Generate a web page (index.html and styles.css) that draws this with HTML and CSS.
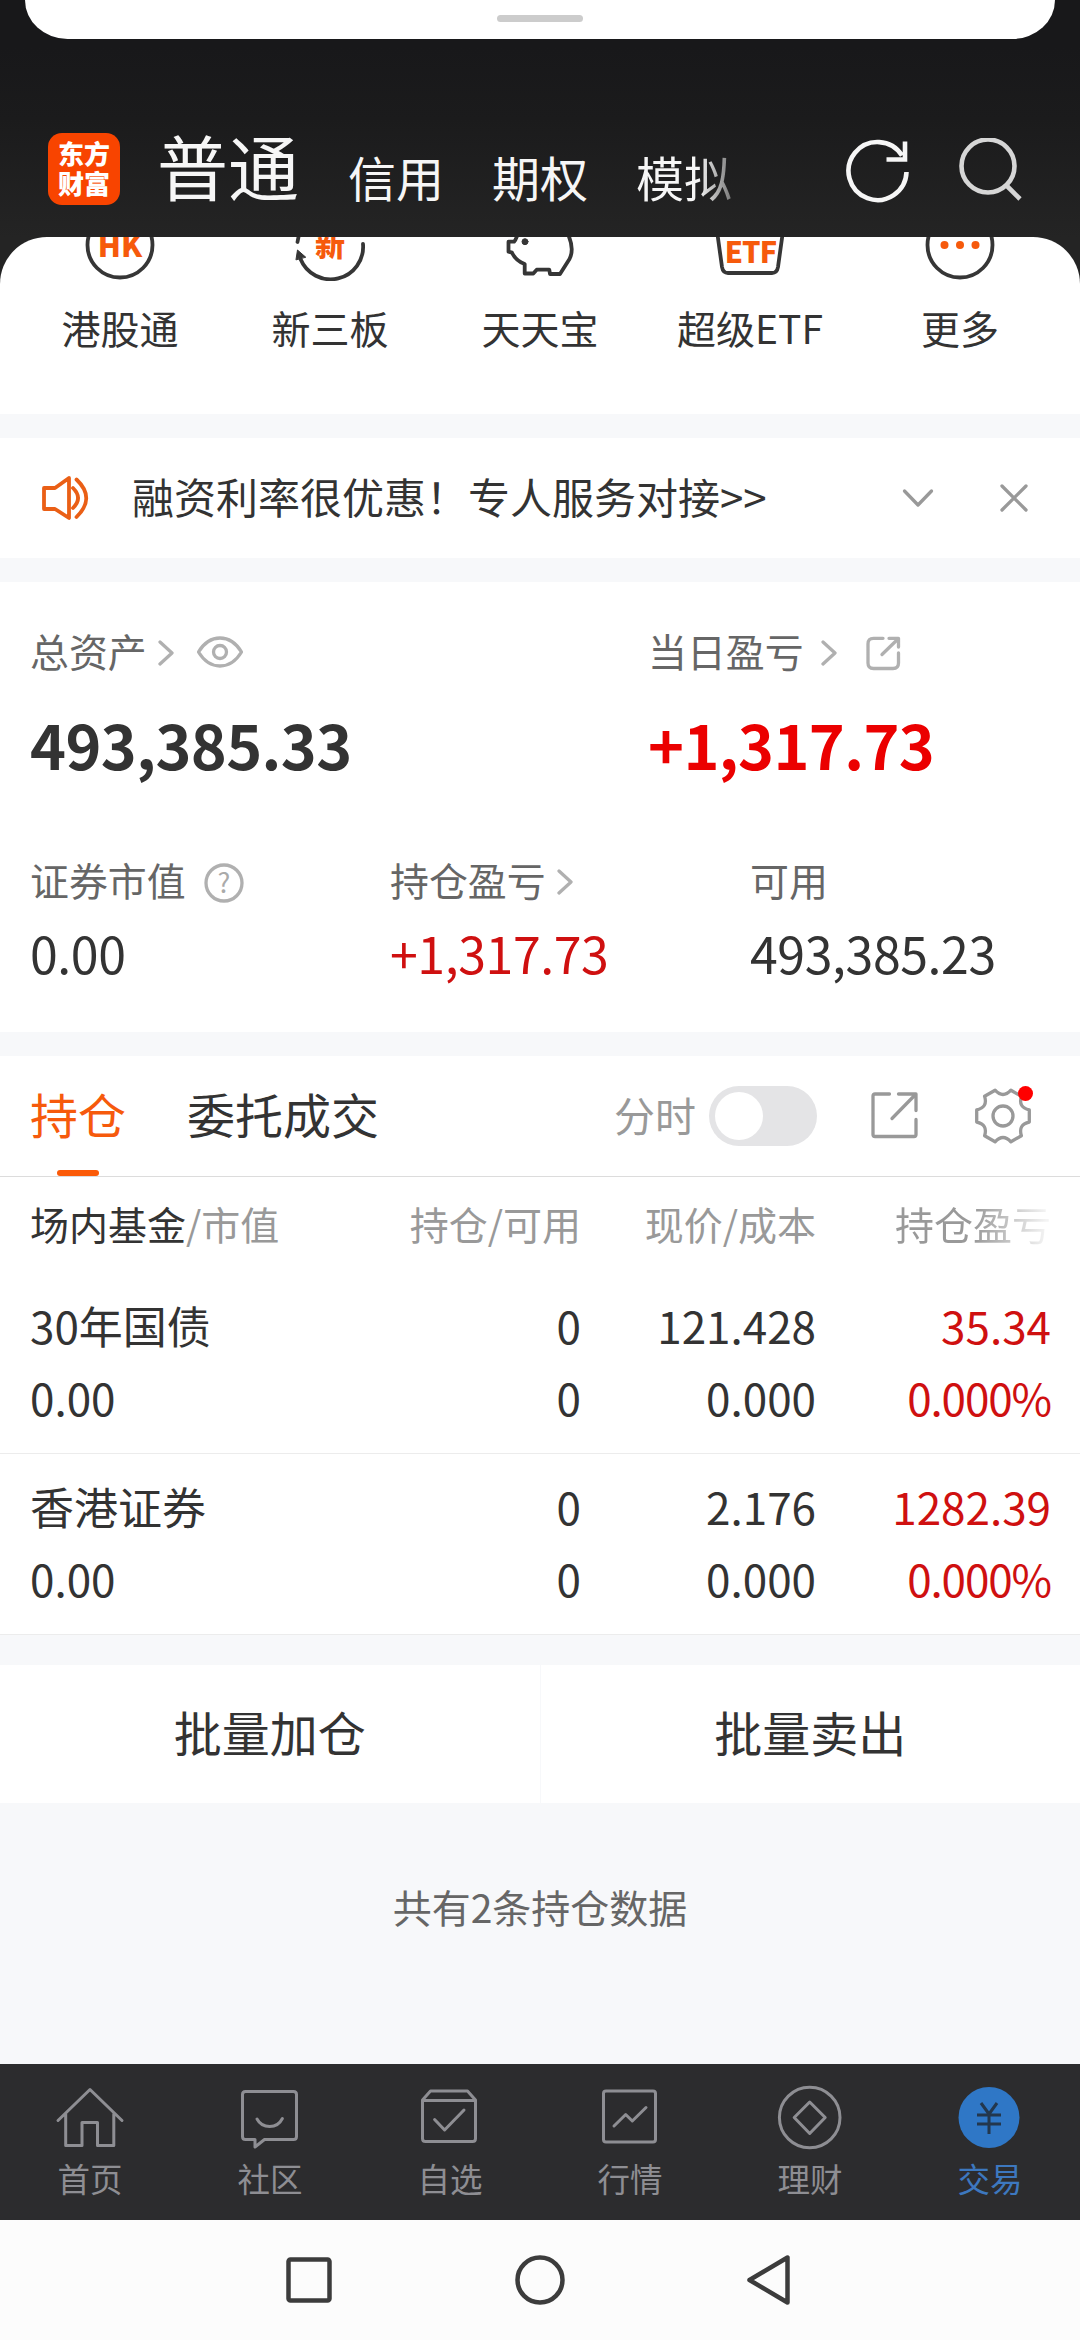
FILE: index.html
```
<!DOCTYPE html>
<html lang="zh-CN">

<head>
    <meta charset="UTF-8">
    <meta name="viewport" content="width=device-width, initial-scale=1.0">
    <title>交易</title>
    <link rel="stylesheet" href="styles.css">
</head>

<body>
    <header class="top">
        <div class="sheet"><span class="handle"></span></div>
        <div class="top-bar">
            <div class="logo">东方<br>财富</div>
            <nav class="accounts">
                <b class="current">普通</b>
                <span>信用</span>
                <span>期权</span>
                <span class="fading">模拟</span>
            </nav>
            <svg class="refresh" width="66" height="66" viewBox="0 0 66 66">
                <path d="M61.500 34A29 29 0 1 1 57 17.500M60 3.500V21.500H41.500" />
            </svg>
            <svg class="search" width="66" height="66" viewBox="0 0 66 66">
                <circle cx="30" cy="28" r="26.500" />
                <path d="M48 47L62 61" />
            </svg>
        </div>
    </header>

    <section class="shortcuts">
        <div class="shortcut">
            <svg width="72" height="72" viewBox="0 0 72 72">
                <circle cx="36" cy="36" r="32.500" />
                <text x="36" y="47.500">HK</text>
            </svg>
            <span>港股通</span>
        </div>
        <div class="shortcut">
            <svg width="72" height="72" viewBox="0 0 72 72">
                <path d="M69 35A32.500 32.500 0 0 1 6.500 50M4.500 28L3.500 33" />
                <path class="solid" d="M2 50.500L3.500 41L11.500 48Z" />
                <text x="36" y="47">新</text>
            </svg>
            <span>新三板</span>
        </div>
        <div class="shortcut">
            <svg width="72" height="72" viewBox="0 0 72 72">
                <path d="M14 24Q12 31 10 32.700H4.500V42.700L8 43.700Q12 52 20.700 55V64.500H29.300L32.700 60.700H45.300L46 65H56L65.500 50Q70.500 40 64.300 26" />
                <circle class="solid" cx="21" cy="32.700" r="3" />
            </svg>
            <span>天天宝</span>
        </div>
        <div class="shortcut">
            <svg width="72" height="72" viewBox="0 0 72 72">
                <path d="M3 22L8 58Q9 64 14 64H58Q63 64 64 58L69 22" />
                <text class="etf" x="36.500" y="53.500">ETF</text>
            </svg>
            <span>超级ETF</span>
        </div>
        <div class="shortcut">
            <svg width="72" height="72" viewBox="0 0 72 72">
                <circle cx="36" cy="36" r="32.500" />
                <g class="dots">
                    <circle cx="20.500" cy="36" r="4" />
                    <circle cx="36" cy="36" r="4" />
                    <circle cx="51.500" cy="36" r="4" />
                </g>
            </svg>
            <span>更多</span>
        </div>
    </section>

    <section class="notice">
        <svg class="speaker" width="48" height="44" viewBox="0 0 48 44">
            <path d="M2 12V33H13L27 42V2L13 12ZM31 12Q41 22 31 32M34.500 3.500Q54 22 34.500 41" />
        </svg>
        <p>融资利率很优惠！专人服务对接&gt;&gt;</p>
        <svg width="32" height="20" viewBox="0 0 32 20"><path d="M2.500 3L16 17L29.500 3" /></svg>
        <svg width="28" height="28" viewBox="0 0 28 28"><path d="M2 2L26 26M26 2L2 26" /></svg>
    </section>

    <section class="assets">
        <div class="totals">
            <div class="total">
                <h3>总资产
                    <svg width="16" height="26" viewBox="0 0 16 26"><path d="M2 2L14 13L2 24" /></svg>
                    <svg class="eye" width="46" height="32" viewBox="0 0 46 32">
                        <path d="M1.500 16Q10 2 23 2T44.500 16Q36 30 23 30T1.500 16Z" />
                        <circle cx="23" cy="16" r="6.500" />
                    </svg>
                </h3>
                <strong>493,385.33</strong>
            </div>
            <div class="total">
                <h3>当日盈亏
                    <svg class="wide" width="16" height="26" viewBox="0 0 16 26"><path d="M2 2L14 13L2 24" /></svg>
                    <svg class="open" width="35" height="35" viewBox="0 0 35 35">
                        <path d="M17 2.300H7.500Q2 2.300 2 8V27Q2 32.500 7.500 32.500H27Q32.500 32.500 32.500 27V17M23 2.300H32.500V11M32 3L16 18.500" />
                    </svg>
                </h3>
                <strong class="up">+1,317.73</strong>
            </div>
        </div>
        <div class="details">
            <div class="detail">
                <h3>证券市值
                    <svg class="help" width="40" height="40" viewBox="0 0 40 40">
                        <circle cx="20" cy="20" r="18" />
                        <text x="20" y="30">?</text>
                    </svg>
                </h3>
                <span>0.00</span>
            </div>
            <div class="detail">
                <h3>持仓盈亏
                    <svg width="16" height="26" viewBox="0 0 16 26"><path d="M2 2L14 13L2 24" /></svg>
                </h3>
                <span class="up">+1,317.73</span>
            </div>
            <div class="detail">
                <h3>可用</h3>
                <span>493,385.23</span>
            </div>
        </div>
    </section>

    <section class="positions">
        <div class="tabs">
            <span class="tab active">持仓</span>
            <span class="tab">委托成交</span>
            <span class="switch-label">分时</span>
            <span class="switch"></span>
            <svg class="share" width="48" height="48" viewBox="0 0 48 48">
                <path d="M18.500 2H4Q2 2 2 4V42.500Q2 44.500 4 44.500H43Q45 44.500 45 42.500V27.500M27.500 2H45V18.500M44 3L21 26.500" />
            </svg>
            <div class="settings">
                <svg width="58" height="58" viewBox="-29 -29 58 58">
                    <path d="M26.300 -6.100V6.100Q14.900 8.600 18.400 19.700L7.900 25.800Q0 17.200 -7.900 25.800L-18.400 19.700Q-14.900 8.600 -26.300 6.100V-6.100Q-14.900 -8.600 -18.400 -19.700L-7.900 -25.800Q0 -17.200 7.900 -25.800L18.400 -19.700Q14.900 -8.600 26.300 -6.100Z" />
                    <circle r="10" />
                </svg>
                <i class="badge"></i>
            </div>
        </div>

        <div class="grid thead">
            <span><b>场内基金</b>/市值</span>
            <span>持仓/可用</span>
            <span>现价/成本</span>
            <span class="fade-out">持仓盈亏</span>
        </div>
        <div class="grid row">
            <span>30年国债</span><span>0</span><span>121.428</span><span class="up">35.34</span>
            <span>0.00</span><span>0</span><span>0.000</span><span class="up percent">0.000%</span>
        </div>
        <div class="grid row">
            <span>香港证券</span><span>0</span><span>2.176</span><span class="up">1282.39</span>
            <span>0.00</span><span>0</span><span>0.000</span><span class="up percent">0.000%</span>
        </div>
    </section>

    <section class="batch">
        <button>批量加仓</button>
        <button>批量卖出</button>
    </section>
    <p class="summary">共有2条持仓数据</p>

    <footer class="tabbar">
        <div class="item">
            <svg width="72" height="72" viewBox="0 0 72 72">
                <path d="M4 39.500L36 8.500L68 39.500M11.700 33V64.500H28V41.500H43.500V64.500H59.800V33" />
            </svg>
            <span>首页</span>
        </div>
        <div class="item">
            <svg width="72" height="72" viewBox="0 0 72 72">
                <path d="M21 58.500H11.500Q8.500 58.500 8.500 55.500V13.500Q8.500 10.500 11.500 10.500H59.500Q62.500 10.500 62.500 13.500V55.500Q62.500 58.500 59.500 58.500H30.500L21 66Z" />
                <path d="M23 38Q27 45.500 35.700 45.500T48.400 37.500" />
            </svg>
            <span>社区</span>
        </div>
        <div class="item">
            <svg width="72" height="72" viewBox="0 0 72 72">
                <path d="M8.500 19L16.500 10H53.500L61.500 19V57.500Q61.500 60.500 58.500 60.500H11.500Q8.500 60.500 8.500 57.500ZM8.500 19.500H61.500M20.600 38.500L30.600 49L50 29" />
            </svg>
            <span>自选</span>
        </div>
        <div class="item">
            <svg width="72" height="72" viewBox="0 0 72 72">
                <rect x="9.500" y="10" width="52" height="51" rx="2.500" />
                <path d="M20 45L31.700 33.500L38.300 40L52 26.500" />
            </svg>
            <span>行情</span>
        </div>
        <div class="item">
            <svg width="72" height="72" viewBox="0 0 72 72">
                <circle cx="35.700" cy="36.500" r="30.300" />
                <path d="M35.700 21L51.200 36.500L35.700 52.500L20.200 36.500Z" />
            </svg>
            <span>理财</span>
        </div>
        <div class="item on">
            <svg width="72" height="72" viewBox="0 0 72 72">
                <circle cx="35" cy="36.500" r="30.500" />
                <path d="M27 22L35 33L43 22M35 33V53M23 34H47M23 43H47" />
            </svg>
            <span>交易</span>
        </div>
    </footer>

    <div class="sysnav">
        <svg width="56" height="56" viewBox="0 0 56 56"><rect x="7.500" y="7.500" width="41" height="41" rx="2" /></svg>
        <svg width="56" height="56" viewBox="0 0 56 56"><circle cx="28" cy="28" r="22.500" /></svg>
        <svg width="56" height="56" viewBox="0 0 56 56"><path d="M6.500 28L44.500 5.500V50.500Z" /></svg>
    </div>
</body>

</html>
```
FILE: styles.css
```
* {
    box-sizing: border-box;
}

body {
    width: 1080px;
    height: 2340px;
    margin: 0;
    display: flex;
    flex-direction: column;
    overflow: hidden;
    background: #f7f8fa;
    color: #333;
    font-family: "Noto Sans CJK SC", sans-serif;
    font-size: 39px;
    line-height: 1;
}

svg {
    display: block;
    flex: none;
    fill: none;
    stroke: #b0b0b0;
    stroke-width: 3.3;
    stroke-linecap: round;
    stroke-linejoin: round;
}

h3, p, b {
    margin: 0;
    font-weight: normal;
}

.up {
    color: #cf1010;
}

/* header */
.top {
    height: 237px;
    background: linear-gradient(#18181a 20%, #1b1b1c 50%, #242424);
}

.sheet {
    width: 1030px;
    height: 39px;
    margin: 0 auto;
    padding-top: 15px;
    background: #fff;
    border-radius: 0 0 48px 48px / 0 0 44px 44px;
}

.handle {
    display: block;
    width: 86px;
    height: 7px;
    margin: 0 auto;
    border-radius: 4px;
    background: #ccc;
}

.top-bar {
    display: flex;
    height: 198px;
    padding: 94px 0 0 48px;
    color: #f6f6f6;
}

.logo {
    width: 72px;
    height: 72px;
    padding-top: 5px;
    border-radius: 14px;
    background: #f84400;
    color: #fff;
    font-size: 26px;
    font-weight: 900;
    line-height: 30px;
    text-align: center;
}

.accounts {
    display: flex;
    align-items: baseline;
    width: 725px;
    height: 72px;
    padding-left: 37px;
    font-size: 48px;
    line-height: 66px;
}

.accounts .current {
    margin-right: 49px;
    font-size: 71px;
    transform: translateY(-2px);
}

.accounts span {
    margin-right: 48px;
}

.accounts .fading {
    background: linear-gradient(90deg, #f6f6f6 65%, #777);
    -webkit-background-clip: text;
    background-clip: text;
    color: transparent;
}

.top-bar svg {
    margin-top: 5px;
    stroke: #f6f6f6;
    stroke-width: 4.6;
    stroke-linecap: butt;
    stroke-linejoin: miter;
}

.top-bar .search {
    margin-left: 47px;
    stroke: #d6d6d6;
}

/* shortcut icons, scrolled partly under the header */
.shortcuts {
    display: flex;
    height: 177px;
    padding: 0 15px;
    border-radius: 47px 47px 0 0;
    overflow: hidden;
    background: #fff;
    box-shadow: 0 0 0 50px #242424;
    clip-path: inset(0);
}

.shortcut {
    display: flex;
    flex-direction: column;
    align-items: center;
    width: 210px;
    margin-top: -28px;
}

.shortcut svg {
    stroke: #363636;
    stroke-width: 3.8;
}

.shortcut span {
    margin-top: 26px;
    line-height: 40px;
}

.shortcut text {
    fill: #f65a0c;
    stroke: none;
    font-size: 30px;
    font-weight: 900;
    text-anchor: middle;
}

.shortcut .etf {
    font-size: 29px;
    letter-spacing: -1px;
}

.shortcut .solid {
    fill: #363636;
    stroke-width: 1;
}

.dots {
    fill: #f65a0c;
    stroke: none;
}

/* notice */
.notice {
    display: flex;
    align-items: center;
    height: 120px;
    margin-top: 24px;
    padding: 0 52px 0 42px;
    background: #fff;
    font-size: 42px;
}

.notice p {
    flex: 1;
    margin: -4px 0 0 42px;
}

.notice svg {
    margin-left: 66px;
    stroke: #999;
}

.notice .speaker {
    margin-left: 0;
    stroke: #ea5f16;
    stroke-width: 3.8;
}

/* assets */
.assets {
    height: 450px;
    margin-top: 24px;
    padding: 45px 0 0 30px;
    background: #fff;
}

.assets h3 {
    display: flex;
    align-items: center;
    height: 46px;
    color: #666;
    font-size: 38.9px;
}

.assets h3 svg {
    margin: 6px 0 0 11px;
}

.assets h3 .eye {
    margin: 3px 0 0 23px;
}

.assets h3 .wide {
    margin-left: 17px;
}

.assets h3 .open {
    margin: 6px 0 0 29px;
}

.assets h3 .help {
    margin: 7px 0 0 18px;
}

.help text {
    fill: #aaa;
    stroke: none;
    font-size: 27px;
    text-anchor: middle;
}

.totals {
    display: grid;
    grid-template-columns: 618px 1fr;
}

.total strong {
    display: block;
    margin-top: 36px;
    font-size: 61px;
    line-height: 70px;
    letter-spacing: -0.6px;
}

.total .up {
    color: #eb0000;
}

.details {
    display: grid;
    grid-template-columns: 360px 360px 1fr;
    margin-top: 77px;
}

.detail span {
    display: block;
    margin-top: 20px;
    font-size: 50px;
    line-height: 60px;
    letter-spacing: -0.4px;
}

/* positions */
.positions {
    margin-top: 24px;
    background: #fff;
}

.tabs {
    display: flex;
    align-items: center;
    height: 121px;
    padding: 0 48px 0 30px;
    border-bottom: 1px solid #dcdcdc;
}

.tab {
    position: relative;
    height: 120px;
    margin-right: 61px;
    font-size: 48px;
    line-height: 115px;
}

.tab.active {
    color: #f65a0c;
}

.tab.active::after {
    content: "";
    position: absolute;
    left: 27px;
    bottom: 0;
    width: 42px;
    height: 6px;
    border-radius: 3px;
    background: #fb5a08;
}

.switch-label {
    margin: -4px 13px 0 auto;
    color: #999;
    font-size: 41px;
}

.switch {
    width: 108px;
    height: 60px;
    padding: 6px;
    border-radius: 30px;
    background: #e4e4e6;
}

.switch::before {
    content: "";
    display: block;
    width: 48px;
    height: 48px;
    border-radius: 50%;
    background: #fff;
}

.share {
    margin: 0 55px 0 54px;
    stroke: #999;
}

.settings {
    position: relative;
}

.settings svg {
    stroke: #999;
}

.badge {
    position: absolute;
    top: -1px;
    right: -1px;
    width: 15px;
    height: 15px;
    border-radius: 50%;
    background: #f00;
}

.grid {
    display: grid;
    grid-template-columns: 280px 271px 235px 235px;
    align-content: start;
    padding: 0 29px 0 30px;
    text-align: right;
}

.grid span:nth-child(4n + 1) {
    text-align: left;
}

.thead {
    height: 96px;
    color: #999;
    font-size: 39px;
    line-height: 92px;
}

.thead b {
    color: #333;
}

.fade-out {
    background: linear-gradient(90deg, #999 67%, #f4f4f4 98%);
    -webkit-background-clip: text;
    background-clip: text;
    color: transparent;
}

.row {
    height: 181px;
    padding-top: 16px;
    border-bottom: 1px solid #ececec;
    font-size: 44px;
    line-height: 72px;
}

.percent {
    letter-spacing: -1.1px;
}

/* bottom of the list */
.batch {
    display: flex;
    gap: 1px;
    margin-top: 30px;
}

.batch button {
    flex: 1;
    height: 138px;
    padding: 0 0 6px;
    border: none;
    background: #fff;
    color: #333;
    font: 48px "Noto Sans CJK SC", sans-serif;
}

.summary {
    height: 261px;
    padding-top: 84px;
    color: #666;
    text-align: center;
}

/* app tab bar */
.tabbar {
    display: flex;
    height: 156px;
    background: #2c2c2e;
    color: #8e8e93;
}

.item {
    display: flex;
    flex-direction: column;
    align-items: center;
    width: 180px;
    padding-top: 17px;
    font-size: 32.5px;
}

.item svg {
    stroke: #8e8e93;
    stroke-width: 3;
}

.item span {
    margin-top: 9px;
}

.item.on {
    color: #3d78bf;
}

.item.on circle {
    fill: #2f77c6;
    stroke: none;
}

.item.on path {
    stroke: #23374d;
    stroke-linecap: butt;
}

.sysnav {
    display: flex;
    justify-content: center;
    align-items: center;
    gap: 175px;
    height: 120px;
    background: #fcfcfc;
}

.sysnav svg {
    stroke: #3c3c3c;
    stroke-width: 4.5;
}
```
